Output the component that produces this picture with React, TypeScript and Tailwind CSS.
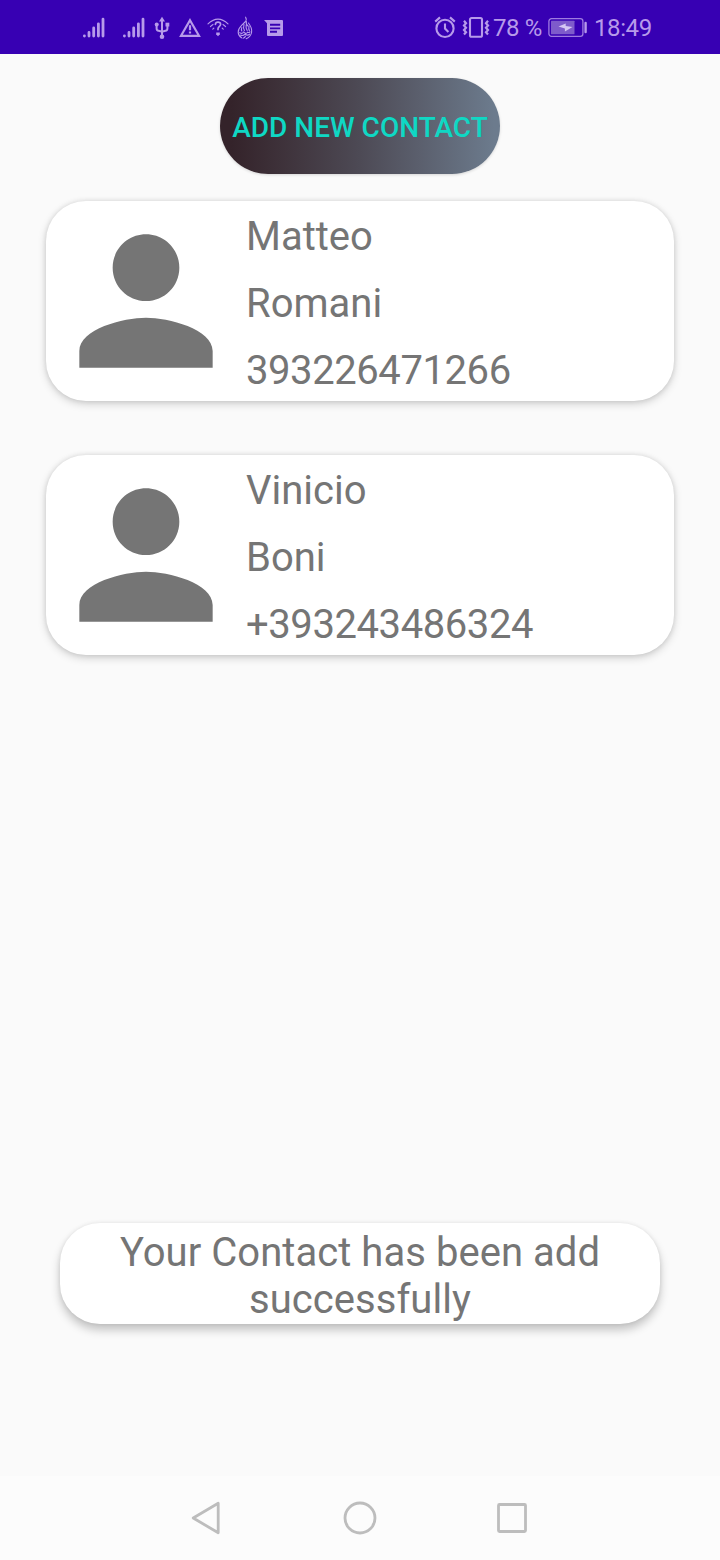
import React from "react";

const TINT = "#b79aea";

function Signal() {
  return (
    <svg className="block h-[22px] w-[24px] shrink-0" viewBox="0 0 24 22" fill="none" stroke={TINT} strokeWidth="2.8" strokeLinecap="round">
      <path d="M2.4 18.8v.2M7 15.4v3.6M11.7 11v8M16.4 6.8V19M21 2.2V19" />
    </svg>
  );
}

function Usb() {
  return (
    <svg className="block h-[24px] w-[16px] shrink-0" viewBox="0 0 16 24" fill="none" stroke={TINT} strokeWidth="2">
      <path d="M8 4v16M2.6 9v3.4q0 2 2 2.4L8 15.8l3.4-1q2-.4 2-2.4V9" />
      <path d="M8 .8l3 4.8H5z" fill={TINT} stroke="none" />
      <circle cx="8" cy="20.8" r="2.3" fill={TINT} stroke="none" />
      <circle cx="2.7" cy="8.6" r="2" fill={TINT} stroke="none" />
      <path d="M11.5 6.7h3.8v3.8h-3.8z" fill={TINT} stroke="none" />
    </svg>
  );
}

function Warning() {
  return (
    <svg className="block h-[20px] w-[22px] shrink-0" viewBox="0 0 22 20" fill="none" stroke={TINT} strokeWidth="2.2">
      <path d="M11 2.2L20 17.8H2z" />
      <path d="M11 7.2v5M11 13.4v2" />
    </svg>
  );
}

function WifiUnknown() {
  return (
    <svg className="block h-[20px] w-[22px] shrink-0" viewBox="0 0 22 20" fill="none" stroke={TINT} strokeWidth="1.1" strokeLinecap="round">
      <path d="M1 5.8Q11-3.6 21 5.8M3.4 8.6Q4.6 7.2 6 6.4M18.6 8.6Q17.4 7.2 16 6.4M5.8 11.2l1-1M16.2 11.2l-1-1" />
      <path d="M8.4 6.4q.2-2.2 2.6-2.2t2.6 2c0 2-2.6 2.2-2.6 4.6v.8" strokeWidth="1.7" />
      <path d="M9.2 14.4h3.6v1.8L11 18.2l-1.8-2z" fill={TINT} stroke="none" />
    </svg>
  );
}

function Flame() {
  return (
    <svg className="block h-[24px] w-[16px] shrink-0" viewBox="0 0 16 24" fill="none" stroke={TINT} strokeWidth="1.1" strokeLinecap="round">
      <path d="M8.6 1.2q1.6 2.4-.6 4.8L4.6 9.4Q1 13 1.2 16.4t3.4 5.4M9.4 5.6q-.8 2.4 1.6 4.4M11.4 7q3.8 4.8 3.2 9.2t-5.4 6.6M7 8.6q-1 3 .4 6M9.2 9q-.6 2.4 1 5.6M12 10.4q-.6 2 .4 4.4M4.8 11.6q-.8 2 0 3.4M2.8 16.6q2.2 1.8 4-.6 2.2 2.6 3.8.2 1.2.8 2.4-.4M3.6 19q2.4 1.4 4.4-.8 2.4 1.8 4.6 0M6 22.2q1.8-.4 2.4-2" />
    </svg>
  );
}

function Message() {
  return (
    <svg className="block h-[18px] w-[20px] shrink-0" viewBox="0 0 20 18">
      <path fill={TINT} fillRule="evenodd" d="M0 1h18q1 0 1 1v14q0 1-1 1H4q-1 0-1-1V4.2zM6 4.8v2h10.2v-2zM6 8.4v1.8h10.2V8.4zM6 11.8v2h7v-2z" />
    </svg>
  );
}

function Alarm() {
  return (
    <svg className="block h-[24px] w-[22px] shrink-0" viewBox="0 0 22 24" fill="none" stroke={TINT} strokeWidth="2.1">
      <circle cx="11" cy="12.4" r="8.6" />
      <path d="M1.2 5.6L6 1.4M20.8 5.6L16 1.4M11 7.6v5l3.4 3.4" />
    </svg>
  );
}

function Vibrate() {
  return (
    <svg className="block h-[24px] w-[28px] shrink-0" viewBox="0 0 28 24" fill="none" stroke={TINT} strokeWidth="2.1">
      <rect x="8" y="2" width="12" height="18.8" rx="1.6" />
      <path d="M2 4.8l2 2.4-2 2.2 2 2.3-2 2.3 2 2.2-2 2.2M26 4.8l-2 2.4 2 2.2-2 2.3 2 2.3-2 2.2 2 2.2" strokeWidth="2.2" />
    </svg>
  );
}

function Battery() {
  return (
    <svg className="block h-[20px] w-[40px] shrink-0" viewBox="0 0 40 20" fill="none">
      <rect x="0.9" y="0.7" width="34" height="17.6" rx="2.6" stroke="#9f7be0" strokeWidth="1.3" />
      <rect x="3" y="2.7" width="23.5" height="13.6" rx="0.6" fill="#7e5bcb" />
      <path d="M10.5 8.4l7.2-3v2.6l6.8 1-7.6 4.6v-3.2z" fill="#d6c6f3" />
      <path d="M37.6 4.9v9.2" stroke={TINT} strokeWidth="2.4" strokeLinecap="round" />
    </svg>
  );
}

function StatusBar() {
  return (
    <header className="flex h-[54px] shrink-0 items-center bg-[#3700b3] pt-px pr-[68px] pl-[82px] text-[24px] leading-[28px] tracking-[-0.4px] text-[#b79aea]">
      <Signal />
      <div className="w-4" />
      <Signal />
      <div className="ml-2">
        <Usb />
      </div>
      <div className="ml-[9px]"><Warning /></div>
      <div className="ml-[6px]"><WifiUnknown /></div>
      <div className="ml-[8px] pt-px"><Flame /></div>
      <div className="ml-[11px]"><Message /></div>
      <div className="ml-auto flex items-center">
        <Alarm />
        <div className="ml-[6px]"><Vibrate /></div>
        <span className="ml-[3px] w-[55px] pt-px whitespace-nowrap">78 %</span>
        <Battery />
        <span className="ml-[6px] w-[58px] pt-px whitespace-nowrap">18:49</span>
      </div>
    </header>
  );
}

type Contact = { first: string; last: string; phone: string };

const contacts: Contact[] = [
  { first: "Matteo", last: "Romani", phone: "393226471266" },
  { first: "Vinicio", last: "Boni", phone: "+393243486324" },
];

function ContactCard({ first, last, phone }: Contact) {
  return (
    <article className="flex h-[200px] items-start rounded-[40px] bg-white shadow-[0_3px_8px_rgba(0,0,0,0.17),0_0_5px_rgba(0,0,0,0.1)]">
      <svg className="block size-[200px] shrink-0" viewBox="0 0 24 24" fill="#757575">
        <path d="M12 12c2.21 0 4-1.79 4-4s-1.79-4-4-4-4 1.79-4 4 1.79 4 4 4zm0 2c-2.67 0-8 1.34-8 4v2h16v-2c0-2.66-5.33-4-8-4z" />
      </svg>
      <div className="flex flex-col gap-5 pt-[12px] text-[40px] leading-[47px] text-[#757575]">
        <p>{first}</p>
        <p>{last}</p>
        <p className="tracking-[-0.42px]">{phone}</p>
      </div>
    </article>
  );
}

export default function App() {
  return (
    <div className="flex h-[1560px] w-[720px] flex-col overflow-hidden bg-[#fafafa] font-[Roboto,sans-serif]">
      <StatusBar />
      <main className="flex flex-1 flex-col pt-6">
        <button className="flex h-[96px] w-[280px] shrink-0 items-center justify-center self-center rounded-full bg-linear-to-r from-[#34232a] from-4% via-[#4d4a55] via-50% to-[#6c7b8d] to-98% pt-[2px] text-[28px] leading-[33px] font-medium whitespace-nowrap text-[#0fd8c4] shadow-[0_1px_3px_rgba(0,0,0,0.15)]">
          ADD NEW CONTACT
        </button>
        <section className="mt-[27px] flex flex-col gap-[54px] px-[46px]">
          {contacts.map((c) => (
            <ContactCard key={c.phone} {...c} />
          ))}
        </section>
        <div className="mx-[60px] mt-auto mb-[152px] flex h-[101px] items-start justify-center rounded-[40px] bg-white pt-[6px] text-center text-[40px] leading-[47px] tracking-[0.05px] text-[#757575] shadow-[0_6px_10px_rgba(0,0,0,0.22),0_0_4px_rgba(0,0,0,0.08)]">
          <p>
            Your Contact has been add
            <br />
            successfully
          </p>
        </div>
      </main>
      <nav className="flex h-[84px] shrink-0 items-center justify-center gap-[116px] bg-[#fcfcfc]">
        <svg className="block size-9" viewBox="0 0 36 36" fill="none" stroke="#bdbdbd" strokeWidth="2.8" strokeLinejoin="round">
          <path d="M28.2 3.2v29.6L3.2 18z" />
        </svg>
        <svg className="block size-9" viewBox="0 0 36 36" fill="none" stroke="#bdbdbd" strokeWidth="2.8">
          <circle cx="18" cy="18" r="15" />
        </svg>
        <svg className="block size-9" viewBox="0 0 36 36" fill="none" stroke="#bdbdbd" strokeWidth="2.8">
          <rect x="4.5" y="4.5" width="27" height="27" rx="1" />
        </svg>
      </nav>
    </div>
  );
}
